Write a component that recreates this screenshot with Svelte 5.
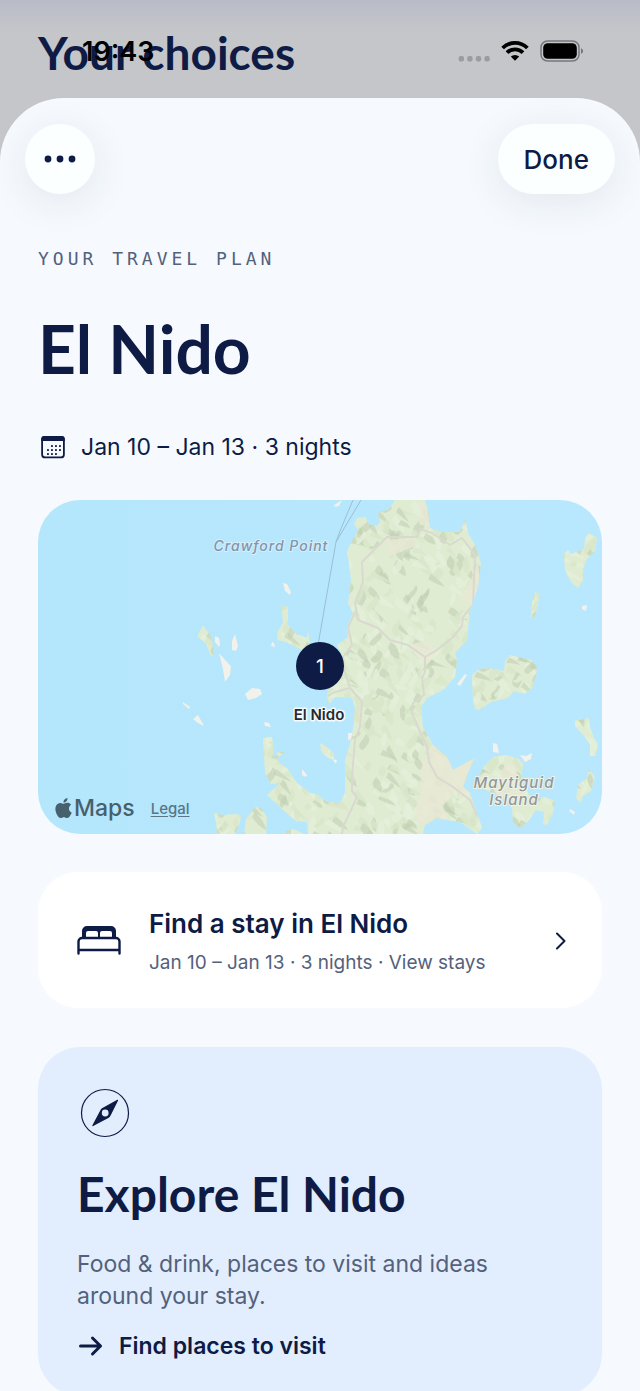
<script lang="ts">
  interface Trip {
    name: string
    dates: string
    nights: number
  }

  let { trip = { name: 'El Nido', dates: 'Jan 10 – Jan 13', nights: 3 } }: { trip?: Trip } = $props()

  let summary = $derived(`${trip.dates} · ${trip.nights} nights`)

  const mainland =
    'M357 0L351 9 340 13 342 22 339 26 330 24 328 17 319 18 316 24 320 30 312 45 309 53 311 63 313 80 310 103 315 113 309 127 310 137 299 145 305 157 302 177 289 192 290 205 297 197 314 198 317 207 316 222 313 240 307 260 307 293 302 303 289 302 280 295 272 293 259 283 249 268 242 263 238 259 247 252 240 252 236 258 234 237 225 238 227 273 233 284 242 283 229 295 245 310 258 321 269 322 270 334H385L387 325 399 318 410 320 422 322 439 334 444 328 439 313 432 293 425 287 431 270 437 258 415 270 409 257 395 245 385 227 383 207 389 198 405 190 417 177 419 160 417 153 429 140 432 110 440 87 443 63 437 45 430 33 427 19 422 32 404 32 392 28 390 10 387 0Z'

  const islands = [
    'M243 105l7 2 0 18 8 9 11 4 1-8 2 14-4 9-6-4-14-7-9-2 1-9 5-8z',
    'M165 125l3 5 4 4 3 11 1 10-3 1-5-12-4-4-5-3z',
    'M434 175l7-6 10-1 15 3 1-10 5-6 12 3 9 2 6 7-1 9-4 12-8 6-10-3-6 7-17 4-11 8-5-1-2-10z',
    'M551 33l8 5-2 13-8 8-4 10 0 12-5 7-7-6-6-12-1-16 4-4 3 4 13-5 1-11z',
    'M497 92l5 2-2 9-3 14-4 0 1-14z',
    'M537 220l6 0 8-2 1 10 4 10 4 6-3 12-5 0 0-12-6-8-9-10z',
    'M551 269l6 8-4 14-8 5-2 7-5-5 2-13 9-7z',
    'M438 282l7-14 10-11 14-2 12 4 4 5-2 17 11 18 13-2 10 4-2 12-6 12-4-1 1-12-8-2-7 10-8 8-8-5-1-14-7-12-17-6-8-4z',
    'M176 313l9 2 11-1 7 1-1 8-5 11h-18l-1-12z',
    'M206 334l2-15 9-12 6 1 6 9-1 17z',
    'M248 331l8-2 10 5h-18z',
    'M282 243l6 3 8 8 0 6-7-3-6-6z',
  ]

  const shoals = [
    'M245 83l4 1 4 8-1 3-5-4z',
    'M177 136l4 2 1 6-1 3-4-5z',
    'M194 141l3-7 3 12-2 5-4-1z',
    'M181 153l7 8 5 5-1 9-5 7-2-13z',
    'M207 194l7-6 8 1 2 5-6 4-8 2z',
    'M145 202l7 5-1 2-6-5z',
    'M155 219l5-4 6 11-6-3z',
    'M234 142l2 1 1 4-4-1z',
    'M226 222l5 1 2 4-6-1z',
    'M264 269l5 6-1 2-4-2z',
    'M419 184l8-10 2 1-7 11z',
    'M455 243l4 1 2 9-6-1z',
    'M482 255l6 1 6-3-1 6-6 3z',
    'M544 106l5-1-1 6-4-2z',
    'M532 309l5 3-1 3-5-4z',
    'M296 5l8-5-3 6-4 1z',
    'M310 233l4 0 0 6-4 1z',
    'M294 259l5 1-1 4z',
  ]

  const plains =
    'M382 0l8 10 2 18-11-4zM347 40l28-2 3 8-26 10zM440 60l2 22-8 22-12-6 12-20zM370 145l17-4 13 10-14 14zM393 245l16 8 6 17 22-13-6 24 3 12-4 4-14-5-11 14 5 13-28 6-6-14 8-20-2-20zM467 264l10 1 4 24 11 12-28 2-8-12z'

  const roads = [
    'M387 157L370 145 352 140 340 128 320 120 317 103 325 82 324 62 349 37 379 37 382 29 394 33 412 45 424 38 437 55 435 105 425 117 424 126 415 137 399 150 387 157 387 172 384 178 386 195 375 203 374 213 380 227 389 247 391 262 399 277 415 287 432 300 440 317',
    'M317 112L310 127 314 145 305 157 307 173 312 188 324 202 322 227 317 240 314 277 314 291 319 297 305 327 304 334',
    'M290 196L297 192 312 188',
  ]

  // Seeded so the relief shading is the same on every render.
  function makeRelief(count: number) {
    let seed = 41
    const rand = () => {
      seed = (seed * 16807) % 2147483647
      return seed / 2147483647
    }
    const ridges: { d: string; tone: number }[] = []
    for (let i = 0; i < count; i++) {
      const x = Math.round(150 + rand() * 410)
      const y = Math.round(rand() * 334)
      const w = Math.round(rand() * 24 - 8)
      const h = Math.round(7 + rand() * 12)
      const bend = Math.round(4 + rand() * 6)
      ridges.push({
        d: `M${x} ${y}q${bend} ${Math.round(h / 3)} ${w} ${h}q${-bend} ${-2} ${-w - 3} ${-h + 5}z`,
        tone: Math.floor(rand() * 3),
      })
    }
    return ridges
  }

  const relief = makeRelief(1300)
  const signalDots = [0, 1, 2, 3]
  const moreDots = [6, 18, 30]
  const calendarDots = [
    [14, 12], [18, 12], [22, 12],
    [10, 16], [14, 16], [18, 16], [22, 16],
    [10, 20], [14, 20], [18, 20],
  ]
</script>

<div class="screen">
  <div class="behind">Your choices</div>

  <div class="status">
    <span class="time">19:43</span>
    <div class="status-icons">
      <svg width="32" height="22" viewBox="0 0 32 22" aria-hidden="true">
        {#each signalDots as i}
          <rect x={i * 8.6 + 0.6} y="16" width="5.4" height="5.4" rx="2" fill="#9b9ca0" />
        {/each}
      </svg>
      <svg width="28" height="22" viewBox="0 0 28 22" aria-hidden="true">
        <g fill="none" stroke="#000" stroke-width="3.8">
          <path d="M1.6 8a17.6 17.6 0 0 1 24.8 0" />
          <path d="M6 12.6a11.3 11.3 0 0 1 16 0" />
        </g>
        <path d="M14 20.8l-4.2-4.2a6 6 0 0 1 8.4 0z" />
      </svg>
      <svg width="44" height="22" viewBox="0 0 44 22" aria-hidden="true">
        <rect x="1" y="1" width="38" height="20" rx="6.5" fill="none" stroke="#77787b" stroke-width="1.5" />
        <rect x="3.2" y="3.2" width="33.6" height="15.6" rx="4.5" />
        <path d="M41 8.2c2.8 1 2.8 4.6 0 5.6z" fill="#77787b" />
      </svg>
    </div>
  </div>

  <main class="sheet">
    <div class="toolbar">
      <button class="round" aria-label="More options">
        <svg width="36" height="10" viewBox="0 0 36 10" fill="currentColor">
          {#each moreDots as cx}
            <circle {cx} cy="5" r="3.4" />
          {/each}
        </svg>
      </button>
      <button class="done">Done</button>
    </div>

    <div class="content">
      <p class="eyebrow">YOUR TRAVEL PLAN</p>
      <h1>{trip.name}</h1>

      <div class="dates">
        <svg width="30" height="26" viewBox="0 0 30 26" aria-hidden="true">
          <rect x="4.1" y="3" width="21.8" height="20.4" rx="3" fill="none" stroke="currentColor" stroke-width="1.8" />
          <path d="M3.2 7V5a3 3 0 0 1 3-3h17.6a3 3 0 0 1 3 3v2z" fill="currentColor" />
          {#each calendarDots as [x, y]}
            <rect x={x - 1} y={y - 1} width="1.9" height="1.9" rx="0.4" fill="currentColor" />
          {/each}
        </svg>
        <span>{summary}</span>
      </div>

      <div class="map">
        <svg class="terrain" viewBox="0 0 564 334" preserveAspectRatio="xMidYMid slice">
          <defs>
            <linearGradient id="sea">
              <stop offset="0" stop-color="#b4e6fc" />
              <stop offset="1" stop-color="#b9e8fe" />
            </linearGradient>
            <clipPath id="land">
              <path d={mainland} />
              {#each islands as d}
                <path {d} />
              {/each}
            </clipPath>
          </defs>
          <rect width="564" height="334" fill="url(#sea)" />
          <g class="ferry">
            <path d="M280 145L298 42 323 0" />
            <path d="M298 42L302 31 315 0" />
          </g>
          {#each shoals as d}
            <path class="shoal" {d} />
          {/each}
          <g clip-path="url(#land)">
            <rect width="564" height="334" fill="#dfecd2" />
            {#each relief as ridge}
              <path class="ridge tone-{ridge.tone}" d={ridge.d} />
            {/each}
            <path d={plains} fill="#e9e8d5" opacity="0.8" />
            {#each roads as d}
              <path class="road" {d} />
            {/each}
          </g>
          <g class="place">
            <text x="233" y="51">Crawford Point</text>
            <text class="on-land" x="476" y="288">Maytiguid</text>
            <text class="on-land" x="476" y="305">Island</text>
          </g>
          <circle cx="282" cy="166" r="24" fill="#0d1b45" />
          <text class="pin" x="282" y="173">1</text>
          <text class="pin-label" x="281" y="220">{trip.name}</text>
        </svg>
        <div class="attribution">
          <span class="maps-logo">
            <svg width="17" height="20" viewBox="2 0 20 24" fill="currentColor" aria-hidden="true">
              <path d="M12.152 6.896c-.948 0-2.415-1.078-3.96-1.04-2.04.027-3.91 1.183-4.961 3.014-2.117 3.675-.546 9.103 1.519 12.09 1.013 1.454 2.208 3.09 3.792 3.039 1.52-.065 2.09-.987 3.935-.987 1.831 0 2.35.987 3.96.948 1.637-.026 2.676-1.48 3.676-2.948 1.156-1.688 1.636-3.325 1.662-3.415-.039-.013-3.182-1.221-3.22-4.857-.026-3.04 2.48-4.494 2.597-4.559-1.429-2.09-3.623-2.324-4.39-2.376-2-.156-3.675 1.09-4.61 1.09zM15.53 3.83c.843-1.012 1.4-2.427 1.245-3.83-1.207.052-2.662.805-3.532 1.818-.78.896-1.454 2.338-1.273 3.714 1.338.104 2.715-.688 3.559-1.701" />
            </svg>
            Maps
          </span>
          <a class="legal" href="#legal">Legal</a>
        </div>
      </div>

      <a class="stay" href="#stays">
        <svg width="44" height="32" viewBox="0 0 44 32" aria-hidden="true">
          <path
            d="M5 12V5a5 5 0 0 1 5-5h24a5 5 0 0 1 5 5v7h-4V7a2 2 0 0 0-2-2h-8a2 2 0 0 0-2 2v5h-2V7a2 2 0 0 0-2-2h-8a2 2 0 0 0-2 2v5z"
            fill="currentColor"
          />
          <path
            d="M1.5 27.5V15.5a3.5 3.5 0 0 1 3.5-3.5h34a3.5 3.5 0 0 1 3.5 3.5v12M2 24h40"
            fill="none"
            stroke="currentColor"
            stroke-width="2.4"
            stroke-linecap="round"
          />
        </svg>
        <span class="stay-text">
          <span class="stay-title">Find a stay in {trip.name}</span>
          <span class="stay-sub">{summary} · View stays</span>
        </span>
        <svg width="12" height="20" viewBox="0 0 12 20" aria-hidden="true">
          <path class="chevron" d="M1 1.5L8.5 9 1 16.5" />
        </svg>
      </a>

      <section class="explore">
        <svg width="50" height="50" viewBox="0 0 50 50" aria-hidden="true">
          <circle cx="25" cy="25" r="23.5" fill="none" stroke="currentColor" stroke-width="1.2" />
          <path
            fill="currentColor"
            fill-rule="evenodd"
            d="M37.3 11.8Q38.6 11.5 38 12.8L30.6 27.4Q30 28.9 28.8 29.7L13.2 38Q11.900 38.5 12.4 37.2L20.5 22Q21.2 20.7 22.4 20ZM25.2 21.6a3.4 3.4 0 1 0 0 6.8a3.4 3.4 0 1 0 0-6.8Z"
          />
        </svg>
        <h2>Explore {trip.name}</h2>
        <p>Food &amp; drink, places to visit and ideas around your stay.</p>
        <a class="places" href="#places">
          <svg width="26" height="22" viewBox="0 0 26 22" aria-hidden="true">
            <path d="M3.5 11h20M15.5 3l8 8-8 8" />
          </svg>
          Find places to visit
        </a>
      </section>
    </div>
  </main>
</div>

<style>
  :global(body) {
    margin: 0;
    background: #c5c6ca;
  }

  .screen {
    --ink: #0d1b45;
    --muted: #54617c;
    position: relative;
    height: 100vh;
    overflow: hidden;
    background: linear-gradient(#b9bcc8, #c5c6ca 32px);
    color: var(--ink);
    font-family: Inter, 'Liberation Sans', sans-serif;
  }

  .behind {
    padding: 21px 38px 13px;
    font-family: Lato, sans-serif;
    font-size: 46px;
    font-weight: 700;
    line-height: 64px;
  }

  .status {
    position: absolute;
    top: 35px;
    left: 82px;
    right: 56px;
    display: flex;
    justify-content: space-between;
    align-items: center;
    height: 32px;
    color: #000;
  }

  .time {
    font-size: 27px;
    font-weight: 600;
  }

  .status-icons {
    display: flex;
    align-items: center;
    gap: 11px;
  }

  .sheet {
    background: #f6faff;
    border-radius: 64px 64px 0 0;
    padding-bottom: 40px;
  }

  .toolbar {
    display: flex;
    justify-content: space-between;
    padding: 26px 25px 0;
  }

  .toolbar button {
    height: 70px;
    border: none;
    border-radius: 35px;
    background: #fbffff;
    box-shadow: 0 8px 40px rgba(30, 40, 60, 0.09);
    color: var(--ink);
    font-family: inherit;
    cursor: pointer;
  }

  .toolbar .round {
    display: flex;
    align-items: center;
    justify-content: center;
    width: 70px;
    padding: 0;
  }

  .toolbar .done {
    padding: 0 26px;
    font-size: 26px;
    font-weight: 500;
  }

  .content {
    padding: 53px 38px 0;
  }

  .eyebrow {
    margin: 0;
    color: var(--muted);
    font-family: 'DejaVu Sans Mono', monospace;
    font-size: 18px;
    letter-spacing: 4px;
    line-height: 24px;
  }

  h1 {
    margin: 38px 0 42px;
    font-family: Lato, sans-serif;
    font-size: 66px;
    font-weight: 700;
    line-height: 80px;
  }

  .dates {
    display: flex;
    align-items: center;
    gap: 13px;
    margin-bottom: 37px;
    font-size: 23px;
    line-height: 32px;
  }

  .map {
    position: relative;
    overflow: hidden;
    border-radius: 42px;
  }

  .terrain {
    display: block;
    width: 100%;
  }

  .ferry {
    fill: none;
    stroke: #9cbfd2;
    stroke-width: 1;
  }

  .shoal {
    fill: #f2f1ec;
  }

  .ridge {
    fill: #bfcdb0;
    opacity: 0.55;
  }

  .tone-1 {
    fill: #e4f0d9;
    opacity: 0.8;
  }

  .tone-2 {
    fill: #d8e6c9;
    opacity: 0.8;
  }

  .road {
    fill: none;
    stroke: #dad9d0;
    stroke-width: 2;
    stroke-linejoin: round;
  }

  .place {
    fill: #8294aa;
    font-size: 14px;
    font-style: italic;
    font-weight: 500;
    letter-spacing: 1px;
    text-anchor: middle;
    paint-order: stroke;
    stroke: #d4effc;
    stroke-width: 2;
  }

  .on-land {
    fill: #92979a;
    font-size: 15px;
    stroke: #eef3e6;
  }

  .pin {
    fill: #fff;
    font-size: 19px;
    font-weight: 500;
    text-anchor: middle;
  }

  .pin-label {
    fill: #26292e;
    font-size: 15px;
    font-weight: 600;
    text-anchor: middle;
    paint-order: stroke;
    stroke: #f4fafc;
    stroke-width: 3;
    stroke-linejoin: round;
  }

  .attribution {
    position: absolute;
    left: 17px;
    bottom: 10px;
    display: flex;
    align-items: center;
    gap: 16px;
    color: #47606e;
  }

  .maps-logo {
    display: flex;
    align-items: center;
    gap: 2px;
    font-size: 23px;
    font-weight: 500;
    line-height: 32px;
  }

  .legal {
    color: #587686;
    font-size: 15px;
    font-weight: 500;
    text-underline-offset: 2px;
  }

  .stay {
    display: flex;
    align-items: center;
    gap: 28px;
    margin-top: 38px;
    padding: 34px 34px 31px 39px;
    border-radius: 40px;
    background: #fff;
    color: var(--ink);
    text-decoration: none;
  }

  .stay-text {
    display: flex;
    flex: 1;
    flex-direction: column;
    gap: 7px;
  }

  .stay-title {
    font-size: 26px;
    font-weight: 600;
    line-height: 36px;
  }

  .stay-sub {
    color: var(--muted);
    font-size: 19px;
    line-height: 28px;
  }

  .chevron,
  .places path {
    fill: none;
    stroke: currentColor;
    stroke-width: 2;
    stroke-linecap: round;
    stroke-linejoin: round;
  }

  .explore {
    margin-top: 39px;
    padding: 41px 39px 34px;
    border-radius: 42px;
    background: #e2eefd;
  }

  .explore > svg {
    display: block;
    margin-left: 3px;
  }

  h2 {
    margin: 24px 0 22px;
    font-family: Lato, sans-serif;
    font-size: 48px;
    font-weight: 700;
    line-height: 64px;
  }

  .explore p {
    max-width: 440px;
    margin: 0 0 18px;
    color: var(--muted);
    font-size: 23px;
    line-height: 32px;
  }

  .places {
    display: flex;
    align-items: center;
    gap: 16px;
    color: var(--ink);
    font-size: 23px;
    font-weight: 600;
    line-height: 32px;
    text-decoration: none;
  }

  .places path {
    stroke-width: 3;
  }
</style>
